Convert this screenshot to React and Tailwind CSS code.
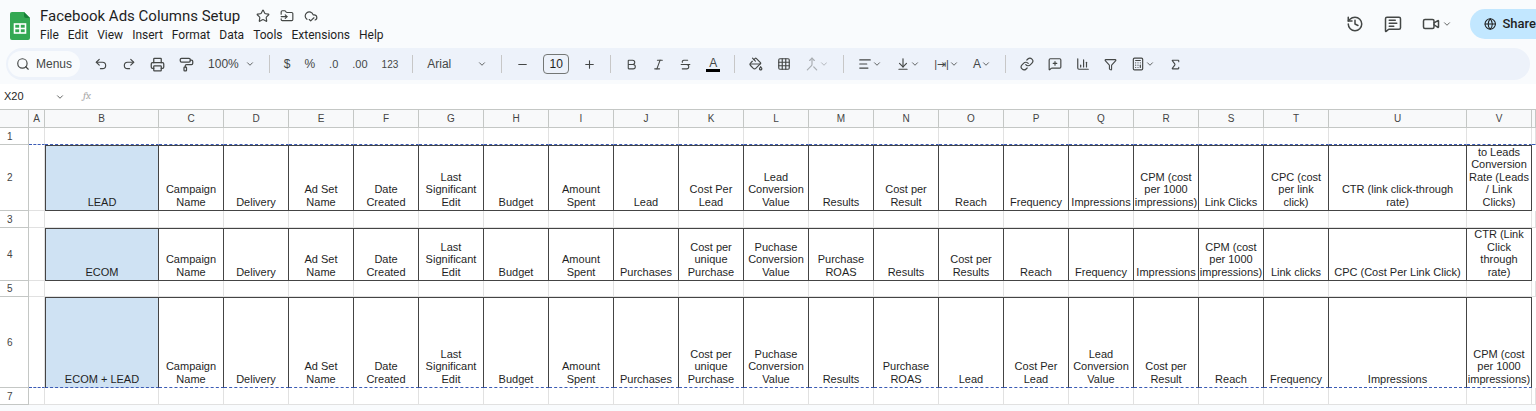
import React from "react";
import { Search, Undo2, Redo2, Printer, PaintRoller, ChevronDown, Bold, Italic, Strikethrough, PaintBucket, Grid3x3, Merge, AlignLeft, ArrowDownToLine, Link, MessageSquarePlus, BarChart3, Filter, Calculator, Sigma, Star, FolderInput, CloudCheck, History, MessageSquareText, Video, Globe, Minus, Plus } from "lucide-react";

const cols = [29,16,114,65,65,65,65,65,65,65,65,65,65,65,65,65,65,65,65,65,65,138,65,4];
const letters = ["","A","B","C","D","E","F","G","H","I","J","K","L","M","N","O","P","Q","R","S","T","U","V",""];
const tmpl = cols.map(c=>c+"px").join(" ");

const r2 = ["Campaign Name","Delivery","Ad Set Name","Date Created","Last Significant Edit","Budget","Amount Spent","Lead","Cost Per Lead","Lead Conversion Value","Results","Cost per Result","Reach","Frequency","Impressions","CPM (cost per 1000 impressions)","Link Clicks","CPC (cost per link click)","CTR (link click-through rate)","Link Clicks to Leads Conversion Rate (Leads / Link Clicks)"];
const r4 = ["Campaign Name","Delivery","Ad Set Name","Date Created","Last Significant Edit","Budget","Amount Spent","Purchases","Cost per unique Purchase","Puchase Conversion Value","Purchase ROAS","Results","Cost per Results","Reach","Frequency","Impressions","CPM (cost per 1000 impressions)","Link clicks","CPC (Cost Per Link Click)","CTR (Link Click through rate)"];
const r6 = ["Campaign Name","Delivery","Ad Set Name","Date Created","Last Significant Edit","Budget","Amount Spent","Purchases","Cost per unique Purchase","Puchase Conversion Value","Results","Purchase ROAS","Lead","Cost Per Lead","Lead Conversion Value","Cost per Result","Reach","Frequency","Impressions","CPM (cost per 1000 impressions)"];

function Row({num,h,label,items,dashedBottom}){
  const db = dashedBottom ? " border-b-[#3b5bb5] [border-bottom-style:dashed]" : "";
  return (
    <div className="grid overflow-hidden" style={{gridTemplateColumns:tmpl,height:h}}>
      <div className="border-r border-b border-[#c4c7c5] bg-white text-[10px] text-[#444] flex items-center pl-[7px]">{num}</div>
      <div className={"border-r border-b border-[#e1e1e1]"+db}></div>
      {label!==undefined ? (<>
        <div className={"bg-[#cfe2f3] border border-[#444] flex items-end justify-center pb-[2px] text-[11px] leading-[12.5px] overflow-hidden"+db}>{label}</div>
        {items.map((t,i)=>(
          <div key={i} className={"border-t border-b border-r border-[#444] flex items-end justify-center text-center pb-[2px] px-[1px] text-[11px] leading-[12.5px] overflow-hidden"+db}>{t}</div>
        ))}
        <div></div>
      </>) : (
        letters.slice(2).map((_,i)=>(<div key={i} className={"border-r border-b border-[#e1e1e1]"+db}></div>))
      )}
    </div>
  );
}

const I = ({c:C,s=16})=> <C size={s} strokeWidth={2} className="text-[#444746]" />;

export default function App(){
  return (
    <div className="w-[1536px] h-[411px] overflow-hidden bg-[#f9fbfd] text-[#1f1f1f]" style={{fontFamily:"'Liberation Sans', Arial, sans-serif"}}>
      <div className="flex items-center h-[48px] pl-[10px] pr-0" style={{fontFamily:"Roboto, 'Open Sans', sans-serif"}}>
        <svg width="20" height="28" viewBox="0 0 20 28" className="mr-[10px] mt-[4px]">
          <path d="M0 2a2 2 0 012-2h12l6 6v20a2 2 0 01-2 2H2a2 2 0 01-2-2z" fill="#34a853"/>
          <path d="M14 0l6 6h-4a2 2 0 01-2-2z" fill="#188038"/>
          <rect x="4.5" y="12" width="11" height="9" fill="none" stroke="white" strokeWidth="1.6"/>
          <line x1="10" y1="12" x2="10" y2="21" stroke="white" strokeWidth="1.6"/>
          <line x1="4.5" y1="16.5" x2="15.5" y2="16.5" stroke="white" strokeWidth="1.6"/>
        </svg>
        <div className="flex flex-col">
          <div className="flex items-center gap-[10px] text-[15px] leading-[20px]">
            <span className="mr-[6px]">Facebook Ads Columns Setup</span>
            <Star size={14} className="text-[#444746]"/><FolderInput size={14} className="text-[#444746]"/><CloudCheck size={14} className="text-[#444746]"/>
          </div>
          <div className="flex gap-[9px] text-[12px] leading-[16px] mt-[1px]">
            {["File","Edit","View","Insert","Format","Data","Tools","Extensions","Help"].map(m=><span key={m}>{m}</span>)}
          </div>
        </div>
        <div className="flex-1"></div>
        <div className="flex items-center gap-[20px] mr-[18px]">
          <I c={History} s={18}/><I c={MessageSquareText} s={18}/>
          <div className="flex items-center gap-[2px]"><I c={Video} s={18}/><ChevronDown size={10} className="text-[#444746]"/></div>
        </div>
        <div className="w-[66px] h-[30px] bg-[#c2e7ff] rounded-l-full flex items-center pl-[14px] gap-[6px] text-[13px] font-medium">
          <Globe size={14}/> Share
        </div>
      </div>
      <div className="mx-[6px] h-[32px] bg-[#edf2fa] rounded-full flex items-center text-[#444746] text-[12px] gap-[14px] pr-4">
        <div className="flex items-center gap-[6px] h-[26px] px-[8px] ml-[2px] rounded-full bg-[#f9fbfd]"><Search size={14}/><span>Menus</span></div>
        <I c={Undo2} s={14}/><I c={Redo2} s={14}/><I c={Printer} s={15}/><I c={PaintRoller} s={15}/>
        <span className="flex items-center gap-[6px]">100% <ChevronDown size={10}/></span>
        <span className="w-px h-[18px] bg-[#c7c7c7]"></span>
        <span>$</span><span>%</span><span className="text-[11px]">.0</span><span className="text-[11px]">.00</span><span className="text-[10px]">123</span>
        <span className="w-px h-[18px] bg-[#c7c7c7]"></span>
        <span className="flex items-center justify-between w-[60px]">Arial <ChevronDown size={10}/></span>
        <span className="w-px h-[18px] bg-[#c7c7c7]"></span>
        <Minus size={13}/><span className="w-[26px] h-[20px] border border-[#747775] rounded flex items-center justify-center text-[12px] text-[#1f1f1f]">10</span><Plus size={13}/>
        <span className="w-px h-[18px] bg-[#c7c7c7]"></span>
        <I c={Bold} s={13}/><I c={Italic} s={13}/><I c={Strikethrough} s={13}/>
        <span className="flex flex-col items-center text-[12px] leading-[12px]">A<span className="w-[14px] h-[3px] bg-black"></span></span>
        <span className="w-px h-[18px] bg-[#c7c7c7]"></span>
        <I c={PaintBucket} s={14}/><I c={Grid3x3} s={14}/><span className="flex items-center opacity-40"><Merge size={14}/><ChevronDown size={10}/></span>
        <span className="w-px h-[18px] bg-[#c7c7c7]"></span>
        <span className="flex items-center"><AlignLeft size={14}/><ChevronDown size={10}/></span>
        <span className="flex items-center"><ArrowDownToLine size={14}/><ChevronDown size={10}/></span>
        <span className="flex items-center text-[11px]">|⇥|<ChevronDown size={10}/></span>
        <span className="flex items-center text-[12px]">A<ChevronDown size={10}/></span>
        <span className="w-px h-[18px] bg-[#c7c7c7]"></span>
        <I c={Link} s={14}/><I c={MessageSquarePlus} s={14}/><I c={BarChart3} s={14}/><I c={Filter} s={13}/>
        <span className="flex items-center"><Calculator size={14}/><ChevronDown size={10}/></span><I c={Sigma} s={13}/>
      </div>
      <div className="h-[26px] bg-white flex items-center text-[11px] mt-[4px] border-b border-[#c4c7c5]">
        <span className="w-[55px] pl-[4px]">X20</span><ChevronDown size={10} className="text-[#444746]"/>
        <span className="ml-[18px] italic text-[#aaa] font-serif">fx</span>
      </div>
      <div className="bg-white">
        <div className="grid h-[18px] text-[10px] text-[#444]" style={{gridTemplateColumns:tmpl}}>
          {letters.map((l,i)=>(<div key={i} className="border-r border-b border-[#c4c7c5] bg-[#f8f9fa] flex items-center justify-center">{l}</div>))}
        </div>
        <Row num="1" h={17} dashedBottom/>
        <Row num="2" h={66} label="LEAD" items={r2}/>
        <Row num="3" h={17}/>
        <Row num="4" h={53} label="ECOM" items={r4}/>
        <Row num="5" h={16}/>
        <Row num="6" h={91} label="ECOM + LEAD" items={r6} dashedBottom/>
        <Row num="7" h={17}/>
      </div>
    </div>
  );
}
